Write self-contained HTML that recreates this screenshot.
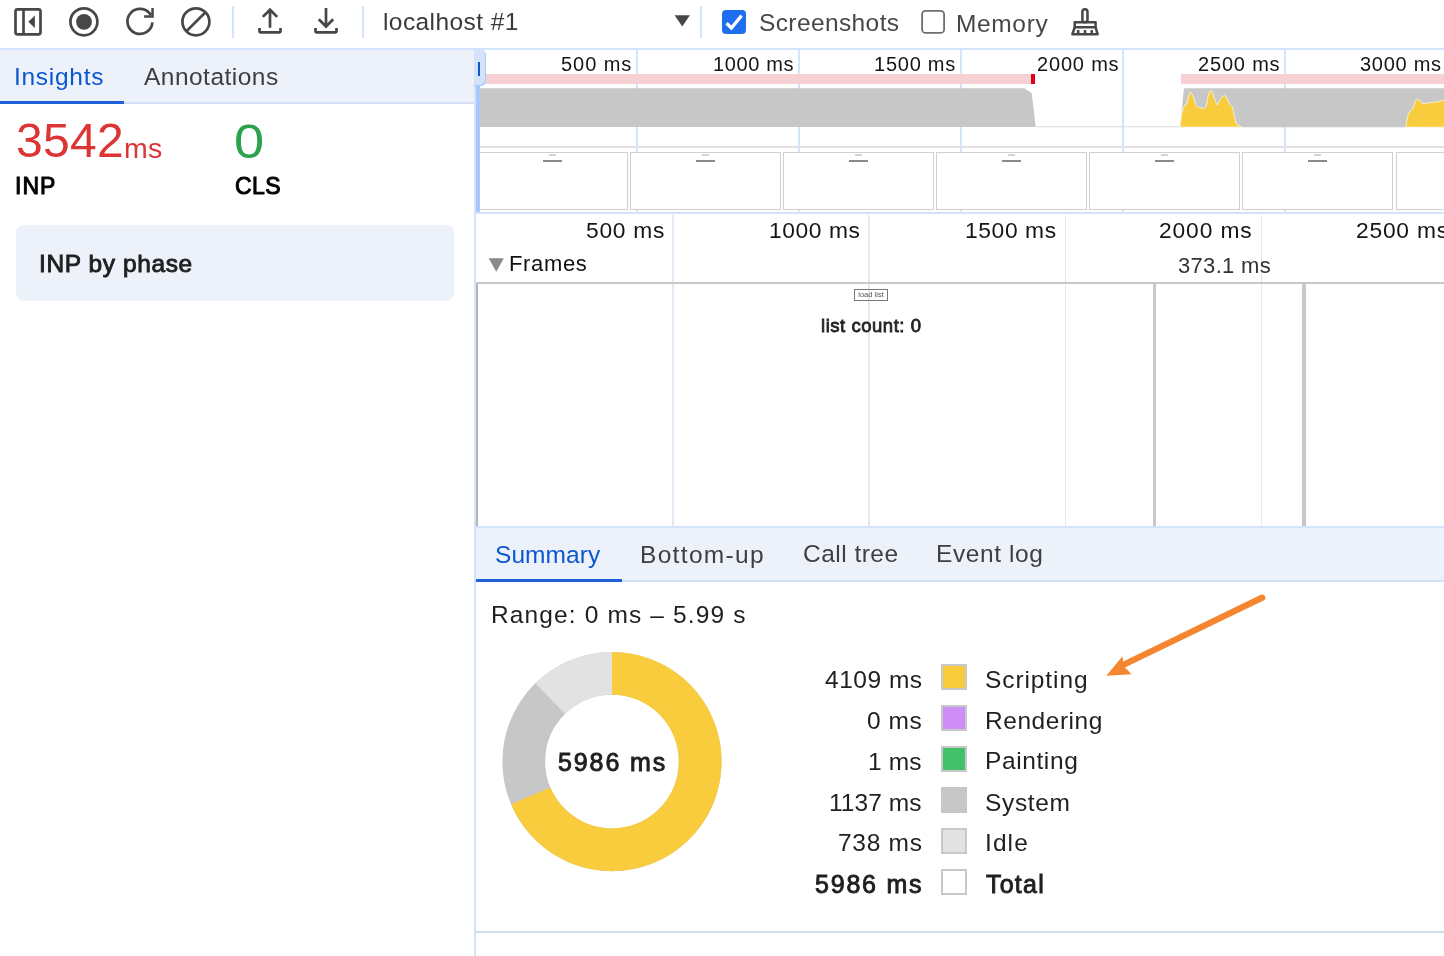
<!DOCTYPE html>
<html><head><meta charset="utf-8"><title>Performance</title>
<style>
html,body{margin:0;padding:0;}
body{width:1444px;height:956px;overflow:hidden;position:relative;background:#fff;font-family:"Liberation Sans",sans-serif;}
.t{position:absolute;white-space:nowrap;will-change:transform;}
.r{position:absolute;}
</style></head><body>
<div class="r" style="left:0px;top:48px;width:1444px;height:2px;background:#d3e3fd;"></div>
<svg class="r" style="left:0;top:0" width="1100" height="48" viewBox="0 0 1100 48">
<g fill="none" stroke="#474747" stroke-width="2.7">
<rect x="15.5" y="9.3" width="25" height="25" rx="2"/>
<line x1="23.5" y1="9.3" x2="23.5" y2="34.3"/>
<circle cx="83.9" cy="21.8" r="13.5"/>
<path d="M152.4 22.3 A12.5 12.5 0 1 1 150.8 15.2"/>
<circle cx="195.9" cy="21.8" r="13.5"/>
<line x1="205.5" y1="12.2" x2="186.3" y2="31.4"/>
<path d="M270 10 V27.7 M262.8 16.9 L270 9.7 L277.2 16.9"/>
<path d="M259.5 28.1 V31.1 Q259.5 32.4 260.8 32.4 H279.2 Q280.5 32.4 280.5 31.1 V28.1"/>
<path d="M326 8.1 V26 M318.8 19.3 L326 26.5 L333.2 19.3"/>
<path d="M315.5 28.1 V31.1 Q315.5 32.4 316.8 32.4 H335.2 Q336.5 32.4 336.5 31.1 V28.1"/>
</g>
<g fill="#474747">
<circle cx="84" cy="21.8" r="7.9"/>
<path d="M28.3 21.8 L34.9 15.6 V28.1 Z"/>
<path d="M151.3 8.1 H153.8 V17.7 H144.1 V15.2 H151.3 Z"/>
<path d="M674.6 15.3 H689.9 L682.25 26.6 Z"/>
</g>
<g fill="none" stroke="#474747" stroke-width="2.5" stroke-linejoin="round">
<rect x="1082.4" y="9.2" width="5.1" height="13" rx="2.55"/>
<path d="M1074.7 22.2 H1095.6 V27.3 H1074.7 Z"/>
<path d="M1074.7 27.3 L1072.4 34.2 H1097.6 L1095.6 27.3"/>
<path d="M1078.2 30 V33.5 M1085 30 V33.5 M1091.7 30 V33.5"/>
</g>
<rect x="722" y="10" width="24" height="24" rx="4" fill="#1f6ef0"/>
<path d="M726.6 23.3 L731.4 28 L741.6 15.6" fill="none" stroke="#fff" stroke-width="3.3"/>
<rect x="922.1" y="10.9" width="22" height="22" rx="3.5" fill="none" stroke="#6e6e6e" stroke-width="1.8"/>
<rect x="232" y="6" width="2" height="32" fill="#d3e3fd"/>
<rect x="362" y="6" width="2" height="32" fill="#d3e3fd"/>
<rect x="700" y="6" width="2" height="32" fill="#d3e3fd"/>
</svg>
<div class="t" style="left:382.96px;top:10.34px;font-size:24.5px;line-height:24.5px;color:#3a3a3a;letter-spacing:0.417px;">localhost #1</div>
<div class="t" style="left:758.56px;top:10.84px;font-size:24.5px;line-height:24.5px;color:#474747;letter-spacing:0.390px;">Screenshots</div>
<div class="t" style="left:956.40px;top:11.52px;font-size:24.5px;line-height:24.5px;color:#474747;letter-spacing:0.642px;">Memory</div>
<div class="r" style="left:0px;top:50px;width:474px;height:52px;background:#edf2fa;"></div>
<div class="r" style="left:0px;top:102px;width:474px;height:2px;background:#d3e0f5;"></div>
<div class="r" style="left:0px;top:101px;width:124px;height:3px;background:#1f5fd6;"></div>
<div class="t" style="left:13.96px;top:64.75px;font-size:24.5px;line-height:24.5px;color:#0b57d0;letter-spacing:0.710px;">Insights</div>
<div class="t" style="left:144.28px;top:64.70px;font-size:24.5px;line-height:24.5px;color:#3c4043;letter-spacing:0.475px;">Annotations</div>
<div class="t" style="left:15.62px;top:117.44px;font-size:48px;line-height:48px;color:#dc3535;letter-spacing:0.327px;">3542</div>
<div class="t" style="left:124.40px;top:133.99px;font-size:28.5px;line-height:28.5px;color:#dc3535;letter-spacing:0.210px;">ms</div>
<div class="t" style="left:234.04px;top:117.96px;font-size:48px;line-height:48px;color:#2ba24e;transform:scaleX(1.13);transform-origin:0 0;">0</div>
<div class="t" style="left:15.46px;top:174.69px;font-size:23px;line-height:23px;color:#000;-webkit-text-stroke:1.0px #000;letter-spacing:1.000px;">INP</div>
<div class="t" style="left:235.12px;top:174.69px;font-size:23px;line-height:23px;color:#000;-webkit-text-stroke:1.0px #000;letter-spacing:0.432px;">CLS</div>
<div class="r" style="left:16px;top:225px;width:437.5px;height:75.6px;background:#edf2fa;border-radius:8px;"></div>
<div class="t" style="left:38.56px;top:251.97px;font-size:24.5px;line-height:24.5px;color:#1f1f1f;-webkit-text-stroke:0.9px #1f1f1f;letter-spacing:0.597px;">INP by phase</div>
<div class="r" style="left:474px;top:50px;width:2px;height:906px;background:#d3e3fd;"></div>
<div class="r" style="left:636px;top:50px;width:2px;height:102px;background:#d3e3fd;"></div>
<div class="r" style="left:636px;top:210px;width:2px;height:2px;background:#d3e3fd;"></div>
<div class="r" style="left:798px;top:50px;width:2px;height:102px;background:#d3e3fd;"></div>
<div class="r" style="left:798px;top:210px;width:2px;height:2px;background:#d3e3fd;"></div>
<div class="r" style="left:960px;top:50px;width:2px;height:102px;background:#d3e3fd;"></div>
<div class="r" style="left:960px;top:210px;width:2px;height:2px;background:#d3e3fd;"></div>
<div class="r" style="left:1122px;top:50px;width:2px;height:102px;background:#d3e3fd;"></div>
<div class="r" style="left:1122px;top:210px;width:2px;height:2px;background:#d3e3fd;"></div>
<div class="r" style="left:1284px;top:50px;width:2px;height:102px;background:#d3e3fd;"></div>
<div class="r" style="left:1284px;top:210px;width:2px;height:2px;background:#d3e3fd;"></div>
<div class="t" style="left:561.26px;top:53.81px;font-size:20px;line-height:20px;color:#151515;letter-spacing:0.948px;">500 ms</div>
<div class="t" style="left:713.40px;top:53.81px;font-size:20px;line-height:20px;color:#151515;letter-spacing:0.617px;">1000 ms</div>
<div class="t" style="left:874.10px;top:53.81px;font-size:20px;line-height:20px;color:#151515;letter-spacing:0.760px;">1500 ms</div>
<div class="t" style="left:1036.56px;top:53.81px;font-size:20px;line-height:20px;color:#151515;letter-spacing:0.817px;">2000 ms</div>
<div class="t" style="left:1198.20px;top:53.81px;font-size:20px;line-height:20px;color:#151515;letter-spacing:0.817px;">2500 ms</div>
<div class="t" style="left:1359.90px;top:53.81px;font-size:20px;line-height:20px;color:#151515;letter-spacing:0.733px;">3000 ms</div>
<div class="r" style="left:486px;top:74px;width:545px;height:10px;background:#f6d1d3;"></div>
<div class="r" style="left:1031px;top:74px;width:4px;height:9.7px;background:#e0001b;"></div>
<div class="r" style="left:1181px;top:74px;width:263px;height:10px;background:#f6d1d3;"></div>
<svg class="r" style="left:0;top:0" width="1444" height="212" viewBox="0 0 1444 212"><line x1="1036" y1="126.8" x2="1182" y2="126.8" stroke="#dcdcdc" stroke-width="1"/><path d="M480 88.2 H1024.4 L1031.7 93.2 L1035.7 127 H480 Z" fill="#c7c7c7"/><path d="M1183.9 88.3 H1444 V127.2 H1180 Z" fill="#c7c7c7"/><path d="M1180.00 127.10 C1180.32 124.78 1181.17 116.72 1181.90 113.20 C1182.63 109.68 1183.62 107.57 1184.40 106.00 C1185.18 104.43 1185.87 105.45 1186.60 103.80 C1187.33 102.15 1188.06 97.98 1188.80 96.10 C1189.54 94.22 1190.12 91.85 1191.05 92.50 C1191.98 93.15 1193.48 97.75 1194.40 100.00 C1195.33 102.25 1195.13 104.62 1196.60 106.00 C1198.07 107.38 1201.63 108.20 1203.20 108.30 C1204.77 108.40 1205.17 108.65 1206.00 106.60 C1206.83 104.55 1207.32 98.68 1208.20 96.00 C1209.08 93.32 1210.28 90.12 1211.30 90.50 C1212.32 90.88 1213.43 96.08 1214.30 98.30 C1215.17 100.52 1215.95 102.78 1216.50 103.80 C1217.05 104.82 1217.03 105.03 1217.60 104.40 C1218.17 103.77 1218.78 101.48 1219.90 100.00 C1221.02 98.52 1223.02 95.50 1224.30 95.50 C1225.58 95.50 1226.68 98.52 1227.60 100.00 C1228.52 101.48 1228.97 103.12 1229.80 104.40 C1230.63 105.68 1231.85 105.77 1232.60 107.70 C1233.35 109.63 1233.65 113.32 1234.30 116.00 C1234.95 118.68 1235.58 122.13 1236.50 123.80 C1237.42 125.47 1238.88 125.45 1239.80 126.00 C1240.72 126.55 1241.63 126.92 1242.00 127.10 Z" fill="#f8cc3c" stroke="#fffbe8" stroke-width="0.8"/><path d="M1405.80 127.10 C1406.10 125.35 1406.95 119.13 1407.60 116.60 C1408.25 114.07 1408.83 113.30 1409.70 111.90 C1410.57 110.50 1411.75 110.12 1412.80 108.20 C1413.85 106.28 1415.12 101.83 1416.00 100.40 C1416.88 98.97 1417.40 99.52 1418.10 99.60 C1418.80 99.68 1419.42 100.25 1420.20 100.90 C1420.98 101.55 1421.07 103.23 1422.80 103.50 C1424.53 103.77 1427.98 102.80 1430.60 102.50 C1433.22 102.20 1436.58 102.05 1438.50 101.70 C1440.42 101.35 1440.85 100.68 1442.10 100.40 C1443.35 100.12 1445.35 100.07 1446.00 100.00 V127.2 Z" fill="#f8cc3c" stroke="#fffbe8" stroke-width="0.8"/></svg>
<div class="r" style="left:480px;top:146px;width:964px;height:2px;background:#e0e0e0;"></div>
<div class="r" style="left:477.0px;top:152px;width:149px;height:56px;border:1px solid #d0d0d0;background:#fff;"></div>
<div class="r" style="left:549.0px;top:154.4px;width:7px;height:1.4px;background:#d4d4d4;"></div>
<div class="r" style="left:543.0px;top:159.8px;width:19px;height:2px;background:#8a8a8a;"></div>
<div class="r" style="left:630.1px;top:152px;width:149px;height:56px;border:1px solid #d0d0d0;background:#fff;"></div>
<div class="r" style="left:702.1px;top:154.4px;width:7px;height:1.4px;background:#d4d4d4;"></div>
<div class="r" style="left:696.1px;top:159.8px;width:19px;height:2px;background:#8a8a8a;"></div>
<div class="r" style="left:783.2px;top:152px;width:149px;height:56px;border:1px solid #d0d0d0;background:#fff;"></div>
<div class="r" style="left:855.2px;top:154.4px;width:7px;height:1.4px;background:#d4d4d4;"></div>
<div class="r" style="left:849.2px;top:159.8px;width:19px;height:2px;background:#8a8a8a;"></div>
<div class="r" style="left:936.2px;top:152px;width:149px;height:56px;border:1px solid #d0d0d0;background:#fff;"></div>
<div class="r" style="left:1008.2px;top:154.4px;width:7px;height:1.4px;background:#d4d4d4;"></div>
<div class="r" style="left:1002.2px;top:159.8px;width:19px;height:2px;background:#8a8a8a;"></div>
<div class="r" style="left:1089.3px;top:152px;width:149px;height:56px;border:1px solid #d0d0d0;background:#fff;"></div>
<div class="r" style="left:1161.3px;top:154.4px;width:7px;height:1.4px;background:#d4d4d4;"></div>
<div class="r" style="left:1155.3px;top:159.8px;width:19px;height:2px;background:#8a8a8a;"></div>
<div class="r" style="left:1242.4px;top:152px;width:149px;height:56px;border:1px solid #d0d0d0;background:#fff;"></div>
<div class="r" style="left:1314.4px;top:154.4px;width:7px;height:1.4px;background:#d4d4d4;"></div>
<div class="r" style="left:1308.4px;top:159.8px;width:19px;height:2px;background:#8a8a8a;"></div>
<div class="r" style="left:1395.5px;top:152px;width:149px;height:56px;border:1px solid #d0d0d0;background:#fff;"></div>
<div class="r" style="left:1467.5px;top:154.4px;width:7px;height:1.4px;background:#d4d4d4;"></div>
<div class="r" style="left:1461.5px;top:159.8px;width:19px;height:2px;background:#8a8a8a;"></div>
<div class="r" style="left:476px;top:86px;width:4px;height:126px;background:#a8c7fa;"></div>
<div class="r" style="left:474px;top:50px;width:12px;height:36px;background:#d3e3fd;border-radius:0 5px 5px 0;box-shadow:inset -1px -1px 0 #a8c7fa;"></div>
<div class="r" style="left:478px;top:62px;width:2px;height:14px;background:#0b57d0;"></div>
<div class="r" style="left:476px;top:212px;width:968px;height:2px;background:#d3e3fd;"></div>
<div class="r" style="left:672.2px;top:215px;width:1.5px;height:311px;background:#e3e9f4;"></div>
<div class="r" style="left:868.4px;top:215px;width:1.5px;height:311px;background:#e3e9f4;"></div>
<div class="r" style="left:1064.6px;top:215px;width:1.5px;height:311px;background:#e3e9f4;"></div>
<div class="r" style="left:1260.8px;top:215px;width:1.5px;height:311px;background:#e3e9f4;"></div>
<div class="t" style="left:585.70px;top:218.54px;font-size:22.8px;line-height:22.8px;color:#151515;letter-spacing:0.740px;">500 ms</div>
<div class="t" style="left:769.40px;top:218.54px;font-size:22.8px;line-height:22.8px;color:#151515;letter-spacing:0.577px;">1000 ms</div>
<div class="t" style="left:965.40px;top:218.54px;font-size:22.8px;line-height:22.8px;color:#151515;letter-spacing:0.614px;">1500 ms</div>
<div class="t" style="left:1159.12px;top:218.54px;font-size:22.8px;line-height:22.8px;color:#151515;letter-spacing:0.874px;">2000 ms</div>
<div class="t" style="left:1355.76px;top:218.54px;font-size:22.8px;line-height:22.8px;color:#151515;letter-spacing:0.767px;">2500 ms</div>
<svg class="r" style="left:0;top:0" width="520" height="290"><path d="M488.7 258.3 H503.8 L496.25 271.7 Z" fill="#8a8a8a"/></svg>
<div class="t" style="left:508.96px;top:253.31px;font-size:22px;line-height:22px;color:#111;letter-spacing:0.656px;">Frames</div>
<div class="t" style="left:1178.48px;top:255.42px;font-size:22px;line-height:22px;color:#333;letter-spacing:0.313px;">373.1 ms</div>
<div class="r" style="left:476px;top:282px;width:968px;height:2px;background:#c8c8c8;"></div>
<div class="r" style="left:476px;top:284px;width:2px;height:242px;background:#b4b4b4;"></div>
<div class="r" style="left:1153px;top:284px;width:3px;height:242px;background:#c8c8c8;"></div>
<div class="r" style="left:1302px;top:284px;width:3.5px;height:242px;background:#c8c8c8;"></div>
<div class="r" style="left:854px;top:289.3px;width:32px;height:9.5px;border:1px solid #777;border-left-width:1.5px;border-right-width:1.5px;"></div>
<div class="r" style="left:855.5px;top:290.3px;width:31px;height:9.5px;font-size:7.5px;line-height:9.5px;text-align:center;color:#555;font-family:Liberation Sans,sans-serif;">load list</div>
<div class="t" style="left:820.84px;top:316.97px;font-size:18.5px;line-height:18.5px;color:#222;-webkit-text-stroke:0.8px #222;letter-spacing:0.532px;">list count: 0</div>
<div class="r" style="left:476px;top:526px;width:968px;height:2px;background:#d3e3fd;"></div>
<div class="r" style="left:476px;top:528px;width:968px;height:52px;background:#edf2fa;"></div>
<div class="r" style="left:476px;top:580px;width:968px;height:2px;background:#d3e0f5;"></div>
<div class="r" style="left:476px;top:579px;width:146px;height:3px;background:#1f5fd6;"></div>
<div class="t" style="left:495.20px;top:542.87px;font-size:24.5px;line-height:24.5px;color:#0b57d0;letter-spacing:0.058px;">Summary</div>
<div class="t" style="left:640.04px;top:543.02px;font-size:24.5px;line-height:24.5px;color:#3c4043;letter-spacing:1.325px;">Bottom-up</div>
<div class="t" style="left:802.62px;top:542.34px;font-size:24.5px;line-height:24.5px;color:#3c4043;letter-spacing:0.475px;">Call tree</div>
<div class="t" style="left:935.82px;top:542.39px;font-size:24.5px;line-height:24.5px;color:#3c4043;letter-spacing:0.597px;">Event log</div>
<div class="t" style="left:491.10px;top:602.65px;font-size:24.5px;line-height:24.5px;color:#1f1f1f;letter-spacing:1.133px;">Range: 0 ms – 5.99 s</div>
<svg class="r" style="left:0;top:0" width="740" height="900"><circle cx="612" cy="761.6" r="88.20" fill="none" stroke="#c7c7c7" stroke-width="42.80"/><path d="M612.00 652.00 A109.6 109.6 0 1 1 511.03 804.22 L550.46 787.58 A66.8 66.8 0 1 0 612.00 694.80 Z" fill="#f8cc3c"/><path d="M535.26 683.35 A109.6 109.6 0 0 1 612.00 652.00 L612.00 694.80 A66.8 66.8 0 0 0 565.23 713.91 Z" fill="#e2e2e2"/></svg>
<div class="t" style="left:558.34px;top:750.17px;font-size:25px;line-height:25px;color:#1f1f1f;-webkit-text-stroke:0.9px #1f1f1f;letter-spacing:1.907px;">5986 ms</div>
<div class="t" style="left:824.70px;top:668.10px;font-size:24.5px;line-height:24.5px;color:#1f1f1f;letter-spacing:0.524px;">4109 ms</div>
<div class="t" style="left:985.34px;top:667.89px;font-size:24.5px;line-height:24.5px;color:#1f1f1f;letter-spacing:0.911px;">Scripting</div>
<div class="r" style="left:941px;top:664.0px;width:22px;height:22px;border:2px solid #c8c8c8;background:#f8cc3c;"></div>
<div class="t" style="left:867.03px;top:709.03px;font-size:24.5px;line-height:24.5px;color:#1f1f1f;letter-spacing:0.561px;">0 ms</div>
<div class="t" style="left:984.54px;top:708.60px;font-size:24.5px;line-height:24.5px;color:#1f1f1f;letter-spacing:0.540px;">Rendering</div>
<div class="r" style="left:941px;top:705.0px;width:22px;height:22px;border:2px solid #c8c8c8;background:#cd8ef8;"></div>
<div class="t" style="left:868.40px;top:749.83px;font-size:24.5px;line-height:24.5px;color:#1f1f1f;letter-spacing:0.103px;">1 ms</div>
<div class="t" style="left:984.54px;top:749.31px;font-size:24.5px;line-height:24.5px;color:#1f1f1f;letter-spacing:0.605px;">Painting</div>
<div class="r" style="left:941px;top:746.1px;width:22px;height:22px;border:2px solid #c8c8c8;background:#44bf6a;"></div>
<div class="t" style="left:829.40px;top:790.62px;font-size:24.5px;line-height:24.5px;color:#1f1f1f;letter-spacing:0.043px;">1137 ms</div>
<div class="t" style="left:985.34px;top:790.50px;font-size:24.5px;line-height:24.5px;color:#1f1f1f;letter-spacing:0.659px;">System</div>
<div class="r" style="left:941px;top:787.1px;width:22px;height:22px;border:2px solid #c7c7c7;background:#c7c7c7;"></div>
<div class="t" style="left:837.80px;top:831.46px;font-size:24.5px;line-height:24.5px;color:#1f1f1f;letter-spacing:0.733px;">738 ms</div>
<div class="t" style="left:984.54px;top:831.49px;font-size:24.5px;line-height:24.5px;color:#1f1f1f;letter-spacing:1.095px;">Idle</div>
<div class="r" style="left:941px;top:828.2px;width:22px;height:22px;border:2px solid #c8c8c8;background:#e2e2e2;"></div>
<div class="t" style="left:815.20px;top:871.87px;font-size:25px;line-height:25px;color:#1f1f1f;-webkit-text-stroke:0.9px #1f1f1f;letter-spacing:1.787px;">5986 ms</div>
<div class="t" style="left:986.14px;top:871.60px;font-size:25px;line-height:25px;color:#1f1f1f;-webkit-text-stroke:0.9px #1f1f1f;letter-spacing:1.235px;">Total</div>
<div class="r" style="left:941px;top:869.2px;width:22px;height:22px;border:2px solid #c8c8c8;background:#ffffff;"></div>
<svg class="r" style="left:0;top:0" width="1444" height="700">
<line x1="1262.2" y1="597.7" x2="1122" y2="665.5" stroke="#f5852f" stroke-width="6.3" stroke-linecap="round"/>
<path d="M1106.3 675.7 L1122.5 656.3 L1123.5 666 L1131.5 674.3 Z" fill="#f5852f"/>
</svg>
<div class="r" style="left:476px;top:931px;width:968px;height:2px;background:#d3dcea;"></div>
</body></html>
